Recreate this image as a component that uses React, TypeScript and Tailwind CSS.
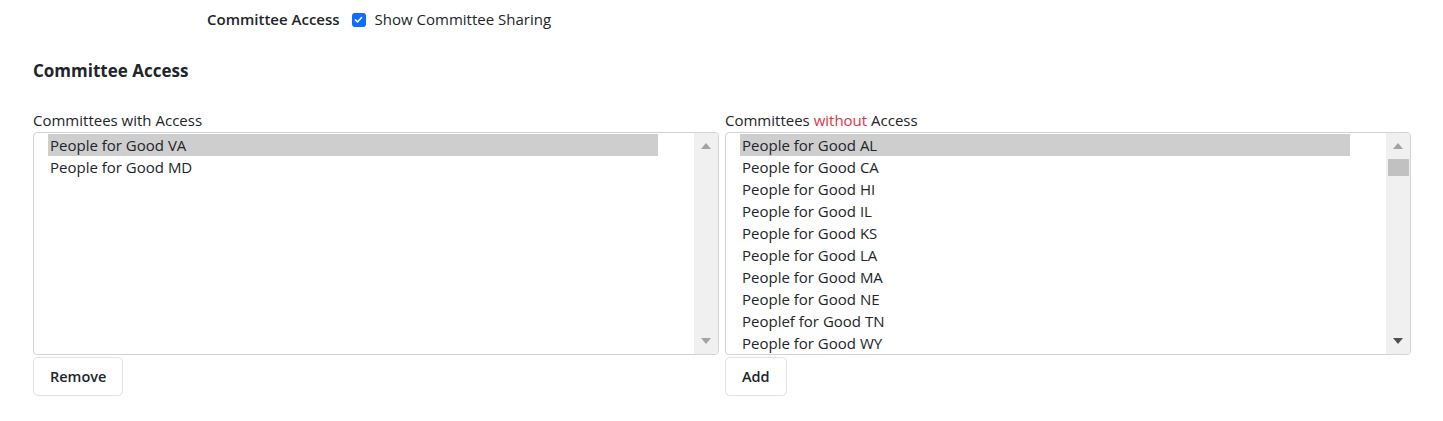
import React from "react";

const withAccess = ["People for Good VA", "People for Good MD"];
const withoutAccess = [
  "People for Good AL",
  "People for Good CA",
  "People for Good HI",
  "People for Good IL",
  "People for Good KS",
  "People for Good LA",
  "People for Good MA",
  "People for Good NE",
  "Peoplef for Good TN",
  "People for Good WY",
];

function Scrollbar({ thumb }: { thumb?: boolean }) {
  return (
    <div className="flex w-[24px] shrink-0 flex-col items-center bg-[#f0f0f0]">
      <div className="flex h-[26px] w-full items-center justify-center">
        <div className="h-0 w-0 border-x-[5px] border-b-[6px] border-x-transparent border-b-[#a3a3a3]" />
      </div>
      {thumb && <div className="h-[17px] w-[21px] bg-[#c1c1c1]" />}
      <div className="flex-1" />
      <div className="flex h-[26px] w-full items-center justify-center">
        <div
          className={
            thumb
              ? "h-0 w-0 border-x-[5px] border-t-[6px] border-x-transparent border-t-[#505050]"
              : "h-0 w-0 border-x-[5px] border-t-[6px] border-x-transparent border-t-[#a3a3a3]"
          }
        />
      </div>
    </div>
  );
}

function ListPanel({
  label,
  items,
  button,
  thumb,
}: {
  label: React.ReactNode;
  items: string[];
  button: string;
  thumb?: boolean;
}) {
  return (
    <div className="flex min-w-0 flex-1 flex-col">
      <div className="h-[21px] text-[15px] leading-[21px] text-[#212529]">{label}</div>
      <div className="mt-[1px] flex h-[223px] overflow-hidden rounded-[4px] border border-[#ced4da] bg-white">
        <div className="flex-1 pl-[14px] pr-[36px] pt-[1px]">
          {items.map((item, i) => (
            <div
              key={item}
              className={
                i === 0
                  ? "h-[22px] bg-[#cecece] pl-[2px] text-[15px] leading-[22px] text-[#212529]"
                  : "h-[22px] pl-[2px] text-[15px] leading-[22px] text-[#212529]"
              }
            >
              {item}
            </div>
          ))}
        </div>
        <Scrollbar thumb={thumb} />
      </div>
      <div className="mt-[2px]">
        <button className="h-[39px] rounded-[5px] border border-[#dee2e6] bg-white px-[16px] text-[14.5px] font-semibold text-[#212529]">
          {button}
        </button>
      </div>
    </div>
  );
}

export default function App() {
  return (
    <div
      className="min-h-screen w-full bg-white text-[#212529]"
      style={{ fontFamily: '"Open Sans", "Noto Sans", sans-serif' }}
    >
      <div className="flex h-[39px] items-center pl-[207px]">
        <span className="text-[15px] font-semibold">Committee Access</span>
        <span className="ml-[12px] flex h-[14px] w-[14px] items-center justify-center rounded-[3px] bg-[#0d6efd]">
          <svg viewBox="0 0 16 16" className="h-[11px] w-[11px]" fill="none">
            <path d="M3.5 8.5l3 3 6-6.5" stroke="white" strokeWidth="2.2" strokeLinecap="round" strokeLinejoin="round" />
          </svg>
        </span>
        <span className="ml-[9px] text-[15px]">Show Committee Sharing</span>
      </div>
      <div className="pl-[33px] pr-[32px]">
        <h2 className="mt-[20px] h-[24px] text-[17px] font-bold leading-[24px]">Committee Access</h2>
        <div className="mt-[27px] flex gap-[6px]">
          <ListPanel label="Committees with Access" items={withAccess} button="Remove" />
          <ListPanel
            label={
              <>
                Committees <span className="text-[#dc3545]">without</span> Access
              </>
            }
            items={withoutAccess}
            button="Add"
            thumb
          />
        </div>
      </div>
    </div>
  );
}
